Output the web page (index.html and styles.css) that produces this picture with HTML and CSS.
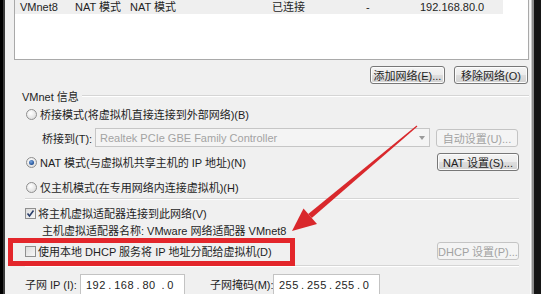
FILE: index.html
```html
<!DOCTYPE html>
<html>
<head>
<meta charset="utf-8">
<link rel="stylesheet" href="styles.css">
</head>
<body>
<div class="window">
  <div class="panel">
    <div class="list">
      <div class="row sel">
        <span>VMnet8</span><span>NAT 模式</span><span>NAT 模式</span><span>已连接</span><span>-</span><span>192.168.80.0</span>
      </div>
    </div>
    <div class="btnrow">
      <button class="btn w75">添加网络(E)...</button>
      <button class="btn w74">移除网络(O)</button>
    </div>
    <div class="group">
      <div class="gtitle"><span>VMnet 信息</span><i class="gline"></i></div>
      <div class="line r1"><span class="radio"></span><span>桥接模式(将虚拟机直接连接到外部网络)(B)</span></div>
      <div class="line bridge">
        <span class="lbl">桥接到(T):</span>
        <div class="combo"><span>Realtek PCIe GBE Family Controller</span><i class="tri"></i></div>
        <button class="btn side dis">自动设置(U)...</button>
      </div>
      <div class="line nat">
        <span class="radio on"></span><span class="grow">NAT 模式(与虚拟机共享主机的 IP 地址)(N)</span>
        <button class="btn side">NAT 设置(S)...</button>
      </div>
      <div class="line host"><span class="radio"></span><span>仅主机模式(在专用网络内连接虚拟机)(H)</span></div>
      <div class="sep s1"></div>
      <div class="line chk1">
        <span class="check"><svg width="9" height="9" viewBox="0 0 9 9"><polyline points="1.5,4.5 3.5,7 7.5,1.5" fill="none" stroke="#2b3f6b" stroke-width="1.6"/></svg></span>
        <span>将主机虚拟适配器连接到此网络(V)</span>
      </div>
      <div class="line name"><span>主机虚拟适配器名称: VMware 网络适配器 VMnet8</span></div>
      <div class="line dhcp">
        <span class="check"></span><span class="grow">使用本地 DHCP 服务将 IP 地址分配给虚拟机(D)</span>
        <button class="btn side dis">DHCP 设置(P)...</button>
      </div>
      <div class="sep s2"></div>
      <div class="line subnet">
        <span class="slbl">子网 IP (I):</span>
        <div class="ip ip1"><span>192</span><b>.</b><span>168</span><b>.</b><span>80</span><b>.</b><span>0</span></div>
        <span class="mlbl">子网掩码(M):</span>
        <div class="ip ip2"><span>255</span><b>.</b><span>255</span><b>.</b><span>255</span><b>.</b><span>0</span></div>
      </div>
    </div>
  </div>
  <div class="redbox"></div>
  <svg class="arrow" width="541" height="294" viewBox="0 0 541 294">
    <polygon points="417.4,126.5 311.8,218 308.2,214 416.6,125.5" fill="#d9282c"/>
    <polygon points="292,231 303.5,208.5 317,224" fill="#d9282c"/>
  </svg>
</div>
</body>
</html>
```
FILE: styles.css
```css
* { box-sizing: border-box; }
html, body { margin: 0; padding: 0; }
body {
  width: 541px;
  height: 294px;
  overflow: hidden;
  background: #161616;
  font-family: "Liberation Sans", "Noto Sans CJK SC", sans-serif;
  font-size: 11px;
  color: #1e1e1e;
}
.window {
  position: relative;
  width: 541px;
  height: 294px;
  padding-left: 5px;
  background: linear-gradient(to right, #000 0, #000 3px, #3a3a3a 3px, #3a3a3a 5px, transparent 5px);
}
.panel {
  width: 526px;
  height: 294px;
  padding-left: 9px;
  background: #f0f0f0;
  border-right: 1px solid #fbfbfb;
  box-shadow: 1px 0 0 #c9c9c9, 3px 0 0 #8d8d8d;
  display: flex;
  flex-direction: column;
}
.list {
  width: 515px;
  height: 60px;
  background: #fff;
  border: 1px solid #a9a9a9;
  border-top: 0;
  flex: none;
}
.row {
  width: 488px;
  height: 14px;
  padding-left: 5px;
  display: grid;
  grid-template-columns: 55px 55px 142px 94px 54px 1fr;
  align-items: center;
  line-height: 14px;
  white-space: nowrap;
}
.row.sel { background: #efefef; }
.btnrow {
  width: 515px;
  margin-top: 6px;
  padding-right: 1px;
  display: flex;
  justify-content: flex-end;
  gap: 9px;
  flex: none;
}
.btn {
  height: 18px;
  padding: 0;
  font: inherit;
  color: #1e1e1e;
  border: 1px solid #777;
  border-radius: 3px;
  background: linear-gradient(#f4f4f4, #ececec 50%, #dedede 51%, #d2d2d2);
  box-shadow: inset 0 0 0 1px #fcfcfc;
  white-space: nowrap;
}
.w75 { width: 75px; }
.w74 { width: 74px; }
.btn.side { width: 82px; flex: none; }
.btn.dis {
  color: #a2a2a2;
  border-color: #c4c4c4;
  background: #f4f4f4;
  box-shadow: none;
}
.group {
  width: 515px;
  padding-left: 8px;
  padding-right: 10px;
  display: flex;
  flex-direction: column;
}
.gtitle {
  margin-top: 6px;
  margin-left: -8px;
  height: 12px;
  display: flex;
  align-items: center;
  gap: 3px;
  padding-left: 8px;
  white-space: nowrap;
}
.gline {
  flex: 1;
  height: 2px;
  border-top: 1px solid #d5d5d5;
  border-bottom: 1px solid #fff;
  margin-right: -10px;
}
.line {
  display: flex;
  align-items: center;
  height: 18px;
  white-space: nowrap;
  flex: none;
}
.grow { flex: 1; }
.radio {
  width: 11px;
  height: 11px;
  border-radius: 50%;
  border: 1px solid #8f8f8f;
  background: radial-gradient(circle at 40% 35%, #ffffff, #e2e2e2 70%, #d2d2d2);
  margin-left: 4px;
  margin-right: 3px;
  position: relative;
  flex: none;
}
.radio.on::after {
  content: "";
  position: absolute;
  left: 2px; top: 2px;
  width: 5px; height: 5px;
  border-radius: 50%;
  background: radial-gradient(circle at 40% 35%, #7aa7e0, #1f4f96 70%, #16365f);
}
.r1 { margin-top: 3px; }
.bridge { margin-top: 5px; height: 19px; }
.lbl { width: 53px; margin-left: 20px; }
.combo {
  width: 335px;
  height: 19px;
  border: 1px solid #c6c6c6;
  background: #f4f4f4;
  color: #a3a3a3;
  display: flex;
  align-items: center;
  padding-left: 4px;
  position: relative;
  margin-right: 6px;
}
.tri {
  position: absolute;
  right: 4px;
  top: 7px;
  width: 0; height: 0;
  border-left: 3px solid transparent;
  border-right: 3px solid transparent;
  border-top: 4px solid #9a9a9a;
}
.nat { margin-top: 6px; }
.host { margin-top: 7px; }
.sep {
  height: 2px;
  border-top: 1px solid #d5d5d5;
  border-bottom: 1px solid #fff;
  margin-left: 3px;
  flex: none;
}
.s1 { margin-top: 2px; }
.chk1 { margin-top: 4px; }
.check {
  width: 11px;
  height: 11px;
  border: 1px solid #8f8f8f;
  background: linear-gradient(135deg, #dcdcdc, #f7f7f7);
  margin-left: 3px;
  margin-right: 2px;
  display: flex;
  align-items: center;
  justify-content: center;
  flex: none;
}
.name { margin-top: 0; height: 16px; padding-left: 20px; }
.dhcp { margin-top: 4px; }
.s2 { margin-top: 5px; }
.subnet { margin-top: 7px; height: 20px; }
.slbl { width: 55px; margin-left: 3px; }
.mlbl { width: 63px; margin-left: 25px; }
.ip {
  height: 20px;
  background: #fff;
  border: 1px solid #c3c3c3;
  border-bottom: 0;
  display: flex;
  align-items: center;
  padding-left: 5px;
  letter-spacing: 0.5px;
}
.ip1 { width: 105px; }
.ip2 { width: 107px; }
.ip span { width: 22px; text-align: left; }
.ip b { font-weight: normal; width: 11px; text-align: center; }
.redbox {
  position: absolute;
  left: 8px;
  top: 238px;
  width: 287px;
  height: 28px;
  border: 5px solid #e3262b;
}
.arrow {
  position: absolute;
  left: 0;
  top: 0;
  pointer-events: none;
}
```
